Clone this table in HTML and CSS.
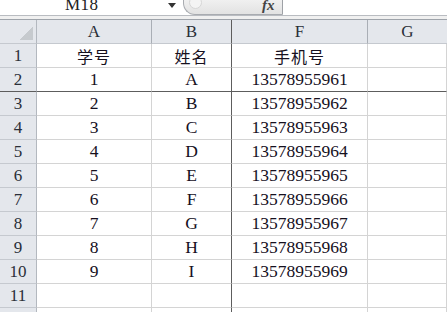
FILE: index.html
```html
<!DOCTYPE html>
<html>
<head>
<meta charset="utf-8">
<link rel="stylesheet" href="styles.css">
</head>
<body>
<div class="topbar">
  <div class="namebox"><span class="name">M18</span><span class="arrow"></span></div>
  <div class="fxbox">
    <span class="knob"></span>
    <span class="fx">fx</span>
  </div>
  <div class="formula"></div>
</div>
<div class="gap"></div>
<div class="sheet">
  <div class="hd corner"></div>
  <div class="hd col">A</div>
  <div class="hd col fz">B</div>
  <div class="hd col">F</div>
  <div class="hd col last">G</div>

  <div class="rn">1</div><div class="c cjk">学号</div><div class="c cjk fz">姓名</div><div class="c cjk">手机号</div><div class="c"></div>
  <div class="rn fr">2</div><div class="c fr">1</div><div class="c fz fr">A</div><div class="c fr">13578955961</div><div class="c fr"></div>
  <div class="rn">3</div><div class="c">2</div><div class="c fz">B</div><div class="c">13578955962</div><div class="c"></div>
  <div class="rn">4</div><div class="c">3</div><div class="c fz">C</div><div class="c">13578955963</div><div class="c"></div>
  <div class="rn">5</div><div class="c">4</div><div class="c fz">D</div><div class="c">13578955964</div><div class="c"></div>
  <div class="rn">6</div><div class="c">5</div><div class="c fz">E</div><div class="c">13578955965</div><div class="c"></div>
  <div class="rn">7</div><div class="c">6</div><div class="c fz">F</div><div class="c">13578955966</div><div class="c"></div>
  <div class="rn">8</div><div class="c">7</div><div class="c fz">G</div><div class="c">13578955967</div><div class="c"></div>
  <div class="rn">9</div><div class="c">8</div><div class="c fz">H</div><div class="c">13578955968</div><div class="c"></div>
  <div class="rn">10</div><div class="c">9</div><div class="c fz">I</div><div class="c">13578955969</div><div class="c"></div>
  <div class="rn">11</div><div class="c"></div><div class="c fz"></div><div class="c"></div><div class="c"></div>
  <div class="rn"></div><div class="c"></div><div class="c fz"></div><div class="c"></div><div class="c"></div>
</div>
</body>
</html>
```

FILE: styles.css
```css
html, body {
  margin: 0;
  padding: 0;
  background: #ffffff;
  overflow: hidden;
}
body {
  width: 447px;
  height: 312px;
  font-family: "Liberation Serif", "Noto Sans CJK SC", serif;
  color: #111;
}
.topbar {
  display: flex;
  height: 15px;
  border-bottom: 1px solid #b9bcc1;
  overflow: hidden;
  background: #fff;
}
.namebox {
  width: 183px;
  position: relative;
  overflow: hidden;
}
.name {
  position: absolute;
  left: 65px;
  top: -5px;
  font-size: 17px;
  line-height: 20px;
  color: #222;
  letter-spacing: 0.5px;
}
.arrow {
  position: absolute;
  left: 168px;
  top: 3px;
  width: 0;
  height: 0;
  border-left: 4px solid transparent;
  border-right: 4px solid transparent;
  border-top: 5px solid #333;
}
.fxbox {
  width: 100px;
  position: relative;
  background: linear-gradient(#f0f0f0, #e2e2e2);
  border-left: 1px solid #a8abb0;
  border-bottom: 1px solid #a8abb0;
  border-right: 1px solid #9ea1a6;
  border-bottom-left-radius: 12px;
  box-sizing: border-box;
  height: 15px;
}
.knob {
  position: absolute;
  left: 5px;
  top: -4px;
  width: 11px;
  height: 11px;
  border-radius: 50%;
  background: #f4f4f4;
  border: 1px solid #d6d6d6;
}
.fx {
  position: absolute;
  left: 78px;
  top: -2px;
  font-family: "Liberation Serif", serif;
  font-style: italic;
  font-weight: bold;
  font-size: 15px;
  color: #444;
  line-height: 15px;
}
.formula {
  flex: 1;
  background: #fff;
}
.gap {
  height: 3px;
  background: #f0f0f0;
  border-bottom: 1px solid #9ea3aa;
}
.sheet {
  display: grid;
  grid-template-columns: 37px 115px 80px 136px 1fr;
  grid-auto-rows: 24px;
}
.sheet > div {
  box-sizing: border-box;
  border-right: 1px solid #d4d4d4;
  border-bottom: 1px solid #d4d4d4;
  display: flex;
  align-items: center;
  justify-content: center;
  font-size: 17.5px;
  white-space: nowrap;
}
.sheet > .hd {
  background: #e4e7ec;
  border-right: 1px solid #a9aeb5;
  border-bottom: 1px solid #c5c9cf;
  color: #2a2f38;
  font-size: 17px;
}
.sheet > .corner {
  background: #e4e7ec linear-gradient(to bottom right, transparent 50%, #c6cace 50%) no-repeat;
  background-size: 13px 14px;
  background-position: 20px 6px;
  border-right: 1px solid #b3b8bf;
}
.sheet > .rn {
  background: #e4e7ec;
  border-right: 1px solid #b3b8bf;
  border-bottom: 1px solid #c5c9cf;
  color: #2a2f38;
  font-size: 17px;
}
.sheet > .cjk {
  font-family: "Noto Sans CJK SC", sans-serif;
  font-size: 16px;
  letter-spacing: 1px;
  color: #222;
}
.sheet > .c {
  color: #16101e;
}
.sheet > .fz {
  border-right: 1px solid #5d5d5d;
}
.sheet > .fr {
  border-bottom: 1px solid #5d5d5d;
}
.sheet > .last {
  border-right: none;
}
```
